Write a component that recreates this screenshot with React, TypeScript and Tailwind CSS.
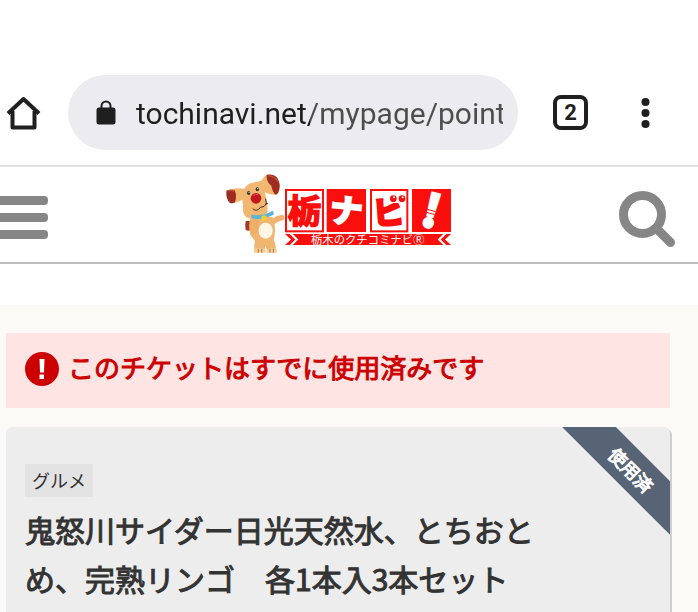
import React from "react";

const jp = "font-['Noto_Sans_CJK_JP',sans-serif]";

function HomeIcon() {
  return (
    <svg viewBox="0 0 36 36" className="h-9 w-9" fill="none" stroke="#1f1f1f" strokeWidth="4" strokeLinejoin="round">
      <path d="M2 18.500 17.500 4 33 18.500" strokeLinejoin="round" />
      <path d="M6.500 16V32.500H28.500V16" />
    </svg>
  );
}

function LockIcon() {
  return (
    <svg viewBox="0 0 20 26" className="h-[26px] w-5 shrink-0" aria-hidden="true">
      <path d="M5.500 10V6a4.500 4.500 0 0 1 9 0V10" fill="none" stroke="#1f1f1f" strokeWidth="2" />
      <rect x="0.500" y="7.500" width="19" height="17" rx="2.500" fill="#1f1f1f" />
    </svg>
  );
}

function Dog() {
  return (
    <g>
      <path d="M92 168h16v28q-10 3-16-1-3-14 0-27z" fill="#a5392d" />
      <path d="M160 158q16 4 26-5l16-4q10 8 4 16l-14 4q-14 12-32 8z" fill="#efb36f" />
      <path d="M110 158q-10 26-4 52l14 18q-4 14-1 33h29l3-19 6 19h22q8-18-3-36 10-36-4-69z" fill="#f0b570" />
      <path d="M118 263q-2-12 8-14h16q10 4 10 14zM156 263q-3-12 8-14h14q9 4 7 14z" fill="#f7cb8e" />
      <path d="M130 251v12M140 251v12M165 251v12M175 251v12" stroke="#9b6232" strokeWidth="2.500" />
      <ellipse cx="152" cy="197" rx="21" ry="24" fill="#fff6e6" />
      <path d="M106 160q-8 26 2 44 14 7 20-4l4-34z" fill="#edae67" />
      <path d="M36 76q20-6 34-6l18 1q10-18 37-20l16-5q4-12 16-17 36-4 38 38-2 20-12 23-20 0-33-9l6 36q6 31-10 38-22 12-46 5-18-8-16-34l-2-22q-14 8-28 10-18 2-18-38z" fill="#f2b872" />
      <path d="M34 77q12-5 24-2 9 14 2 37-7 4-15 2-13-12-11-37z" fill="#9e2c20" />
      <path d="M155 29q34-6 39 30 0 24-11 30-10-6-14-27-16-12-14-33z" fill="#9e2c20" />
      <path d="M40 77q10-2 18 1M160 32q20 3 28 17" fill="none" stroke="#c75438" strokeWidth="4" />
      <ellipse cx="101" cy="84" rx="5" ry="6" fill="#26362f" />
      <ellipse cx="127" cy="73" rx="5" ry="6" fill="#26362f" />
      <circle cx="102" cy="82" r="1.800" fill="#fff" />
      <circle cx="128" cy="71" r="1.800" fill="#fff" />
      <circle cx="123" cy="100" r="16" fill="#c4161e" />
      <path d="M114 93q7-8 15-4" fill="none" stroke="#e4565a" strokeWidth="3" />
      <path d="M114 132q12 10 22-5 13 0 18-11l-2-14M152 117l6-1" fill="none" stroke="#482c1e" strokeWidth="3" strokeLinecap="round" />
      <path d="M108 149q35 6 66-12l3 11q-32 20-67 12z" fill="#5ab4da" />
      <circle cx="147" cy="159" r="8" fill="#efd22f" />
    </g>
  );
}

function Logo() {
  return (
    <svg viewBox="30 24 678 243" className="h-[81px] w-[226px]" role="img" aria-label="栃ナビ！">
      <rect x="213" y="75" width="111" height="124" fill="#fff" stroke="#fb0f0c" strokeWidth="6" />
      <rect x="335" y="72" width="118" height="129" fill="#fb0f0c" />
      <rect x="468" y="75" width="109" height="124" fill="#fff" stroke="#fb0f0c" strokeWidth="6" />
      <rect x="591" y="72" width="117" height="129" fill="#fb0f0c" />
      <g className="font-['Noto_Sans_CJK_JP',sans-serif] font-bold" textAnchor="middle">
        <text x="268" y="174" fontSize="100" fill="#fb0f0c" stroke="#fb0f0c" strokeWidth="5">栃</text>
        <text x="394" y="173" fontSize="98" fill="#fff" stroke="#fff" strokeWidth="7" transform="rotate(6 394 137)">ナ</text>
        <text x="522" y="176" fontSize="96" fill="#fb0f0c" stroke="#fb0f0c" strokeWidth="8" transform="rotate(-4 520 137)">ビ</text>
        <text x="650" y="186" fontSize="132" fill="#fff" stroke="#fff" strokeWidth="10" transform="rotate(15 650 137)">!</text>
      </g>
      <rect x="521" y="80" width="52" height="34" fill="#fff" />
      <g fill="#fb0f0c">
        <circle cx="535" cy="101" r="10" />
        <circle cx="561" cy="101" r="10" />
      </g>
      <g fill="#fff">
        <circle cx="537" cy="97" r="3" />
        <circle cx="563" cy="97" r="3" />
      </g>
      <path d="M630 131l32 9M628 140l32 9" stroke="#fb0f0c" strokeWidth="3" />
      <path d="M210 207H708L690 223.500 708 240H210L228 223.500z" fill="#fb0f0c" />
      <path d="M224 207h9l17 16.500-17 16.500h-9l17-16.500z" fill="#fff" />
      <path d="M694 207h-9l-17 16.500 17 16.500h9l-17-16.500z" fill="#fff" />
      <text x="288" y="236" fontSize="34" fill="#fff" className="font-['Noto_Sans_CJK_JP',sans-serif]">栃木のクチコミナビⓇ</text>
      <Dog />
    </svg>
  );
}

export default function App() {
  return (
    <div className={`min-h-screen overflow-x-hidden bg-white text-[#333] ${jp}`}>
      <div className="flex items-center border-b-2 border-[#e0e0e0] pt-[75px] pr-[34px] pb-[15px] pl-[6px]">
        <button type="button" aria-label="ホーム" className="shrink-0">
          <HomeIcon />
        </button>
        <div className="ml-[26px] flex h-[75px] min-w-0 flex-1 items-center gap-5 rounded-full bg-[#ebebf0] pr-[15px] pl-7">
          <LockIcon />
          <input
            type="text"
            aria-label="アドレス"
            defaultValue="tochinavi.net/mypage/point"
            className="mt-[2px] h-12 min-w-0 flex-1 bg-[linear-gradient(90deg,#1f1f1f_174px,#4d4d4d_174px)] bg-clip-text font-['Roboto',sans-serif] text-[30px] text-transparent outline-none"
          />
        </div>
        <button type="button" aria-label="タブ" className="ml-[35px] flex h-[35px] w-[35px] shrink-0 items-center justify-center rounded-lg border-4 border-[#1f1f1f] font-['Roboto',sans-serif] text-[22px] leading-none font-bold text-[#1f1f1f]">
          2
        </button>
        <button type="button" aria-label="メニュー" className="ml-10 shrink-0">
          <svg viewBox="0 0 36 36" className="h-9 w-9" fill="#1f1f1f">
            <circle cx="17.500" cy="7" r="4" />
            <circle cx="17.500" cy="18" r="4" />
            <circle cx="17.500" cy="29" r="4" />
          </svg>
        </button>
      </div>

      <header className="flex h-[97px] items-center justify-between border-b-2 border-[#bdbdbd] pr-[23px]">
        <button type="button" aria-label="サイトメニュー" className="flex w-14 flex-col gap-2 pt-[6px]">
          <span className="h-[9px] w-12 rounded-r-sm bg-[#868686]" />
          <span className="h-[9px] w-12 rounded-r-sm bg-[#868686]" />
          <span className="h-[9px] w-12 rounded-r-sm bg-[#868686]" />
        </button>
        <a href="#top" className="block pb-[2px]">
          <Logo />
        </a>
        <button type="button" aria-label="検索">
          <svg viewBox="0 0 56 56" className="mt-[9px] h-14 w-14" fill="none" stroke="#868686">
            <circle cx="23.500" cy="23.500" r="19" strokeWidth="9" />
            <path d="M38 38 51.500 51.500" strokeWidth="9" strokeLinecap="round" />
          </svg>
        </button>
      </header>

      <main className="mt-[41px] bg-[#fbfaf6] pt-7 pr-7 pl-[6px]">
        <div role="alert" className="flex h-[75px] items-center gap-[9px] bg-[#ffe4e4] pb-1 pl-[19px] text-[#cc0000]">
          <svg viewBox="0 0 34 34" className="h-[34px] w-[34px] shrink-0" aria-hidden="true">
            <circle cx="17" cy="17" r="17" fill="#cc0000" />
            <path d="M14.500 7h5l-0.500 13.500h-4zM14.500 22.500h4.500v4.500h-4.500z" fill="#fff" />
          </svg>
          <p className="pb-1 text-[26px] leading-[40px] [-webkit-text-stroke:1px]">このチケットはすでに使用済みです</p>
        </div>

        <section className="relative mt-[19px] min-h-[185px] rounded-t-md bg-[#ededed] px-[19px] pt-[37px] shadow-[2px_2px_0_#cfcfd1]">
          <div className="pointer-events-none absolute inset-0 overflow-hidden rounded-t-md">
            <span className="absolute top-[22px] -right-10 flex h-[38px] w-40 rotate-45 items-center justify-center bg-[#566475] pl-1 text-[18px] text-white [-webkit-text-stroke:1px]">
              使用済
            </span>
          </div>
          <span className="inline-block h-[33px] bg-[#e3e3e3] px-[7px] text-[18px] leading-[33px]">グルメ</span>
          <h1 className="mt-2 max-w-[520px] text-[30px] leading-[49px] font-normal [-webkit-text-stroke:1px]">
            鬼怒川サイダー日光天然水、とちおとめ、完熟リンゴ　各1本入3本セット
          </h1>
        </section>
      </main>
    </div>
  );
}
